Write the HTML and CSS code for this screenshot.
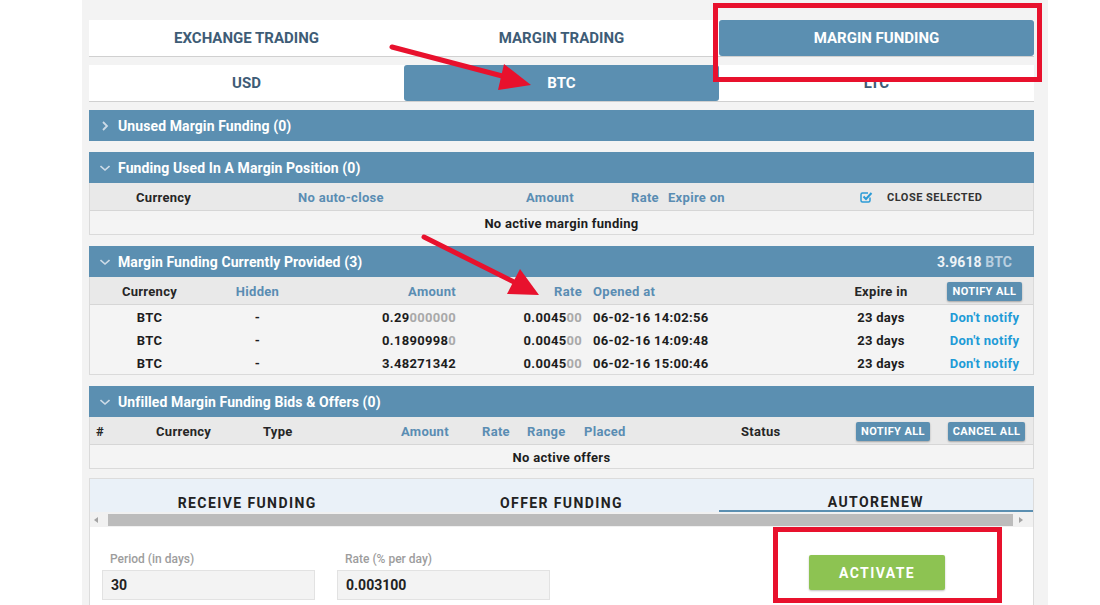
FILE: index.html
```html
<!DOCTYPE html>
<html>
<head>
<meta charset="utf-8">
<link rel="stylesheet" href="styles.css">
</head>
<body>
<div class="page">
  <div class="tabs main-tabs">
    <div class="tab">EXCHANGE TRADING</div>
    <div class="tab">MARGIN TRADING</div>
    <div class="tab active">MARGIN FUNDING</div>
  </div>
  <div class="tabs cur-tabs">
    <div class="tab">USD</div>
    <div class="tab active">BTC</div>
    <div class="tab">LTC</div>
  </div>

  <section class="panel first">
    <div class="panel-head">
      <svg class="chev" width="10" height="10" viewBox="0 0 10 10"><path d="M3 1l4 4-4 4" fill="none" stroke="#cddbe7" stroke-width="1.8"/></svg>
      <span>Unused Margin Funding (0)</span>
    </div>
  </section>

  <section class="panel">
    <div class="panel-head">
      <svg class="chev" width="10" height="10" viewBox="0 0 10 10"><path d="M0.5 3l4.5 4 4.5-4" fill="none" stroke="#cddbe7" stroke-width="1.6"/></svg>
      <span>Funding Used In A Margin Position (0)</span>
    </div>
    <div class="panel-body">
      <div class="row head g2">
        <div class="c pad46">Currency</div>
        <div class="c sort">No auto-close</div>
        <div class="c sort">Amount</div>
        <div class="c sort">Rate</div>
        <div class="c sort">Expire on</div>
        <div class="c closesel">
          <svg width="13" height="12" viewBox="0 0 13 12"><path d="M10 6.5V9.5a1.5 1.5 0 0 1-1.5 1.5h-6A1.5 1.5 0 0 1 1 9.5v-6A1.5 1.5 0 0 1 2.5 2h5.5" fill="none" stroke="#2b9bd6" stroke-width="1.5"/><path d="M3.5 5.5l2.5 2.5 5.5-6" fill="none" stroke="#2b9bd6" stroke-width="2"/></svg>
          <span>CLOSE SELECTED</span>
        </div>
      </div>
      <div class="row empty">No active margin funding</div>
    </div>
  </section>

  <section class="panel">
    <div class="panel-head">
      <svg class="chev" width="10" height="10" viewBox="0 0 10 10"><path d="M0.5 3l4.5 4 4.5-4" fill="none" stroke="#cddbe7" stroke-width="1.6"/></svg>
      <span>Margin Funding Currently Provided (3)</span>
      <span class="total">3.9618 <span class="cur">BTC</span></span>
    </div>
    <div class="panel-body">
      <div class="row head g3">
        <div class="c ctr">Currency</div>
        <div class="c ctr sort">Hidden</div>
        <div class="c rgt sort">Amount</div>
        <div class="c rgt sort">Rate</div>
        <div class="c pad11 sort">Opened at</div>
        <div class="c ctr">Expire in</div>
        <div class="c ctr"><span class="btn w75">NOTIFY ALL</span></div>
      </div>
      <div class="row data g3">
        <div class="c ctr">BTC</div>
        <div class="c ctr">-</div>
        <div class="c rgt">0.29<span class="dim">000000</span></div>
        <div class="c rgt">0.0045<span class="dim">00</span></div>
        <div class="c pad11">06-02-16 14:02:56</div>
        <div class="c ctr">23 days</div>
        <div class="c ctr link">Don't notify</div>
      </div>
      <div class="row data g3">
        <div class="c ctr">BTC</div>
        <div class="c ctr">-</div>
        <div class="c rgt">0.1890998<span class="dim">0</span></div>
        <div class="c rgt">0.0045<span class="dim">00</span></div>
        <div class="c pad11">06-02-16 14:09:48</div>
        <div class="c ctr">23 days</div>
        <div class="c ctr link">Don't notify</div>
      </div>
      <div class="row data g3">
        <div class="c ctr">BTC</div>
        <div class="c ctr">-</div>
        <div class="c rgt">3.48271342</div>
        <div class="c rgt">0.0045<span class="dim">00</span></div>
        <div class="c pad11">06-02-16 15:00:46</div>
        <div class="c ctr">23 days</div>
        <div class="c ctr link">Don't notify</div>
      </div>
    </div>
  </section>

  <section class="panel">
    <div class="panel-head">
      <svg class="chev" width="10" height="10" viewBox="0 0 10 10"><path d="M0.5 3l4.5 4 4.5-4" fill="none" stroke="#cddbe7" stroke-width="1.6"/></svg>
      <span>Unfilled Margin Funding Bids &amp; Offers (0)</span>
    </div>
    <div class="panel-body">
      <div class="row head g4">
        <div class="c pad7">#</div>
        <div class="c">Currency</div>
        <div class="c">Type</div>
        <div class="c sort">Amount</div>
        <div class="c sort">Rate</div>
        <div class="c sort">Range</div>
        <div class="c sort">Placed</div>
        <div class="c">Status</div>
        <div class="c"><span class="btn w74">NOTIFY ALL</span></div>
        <div class="c"><span class="btn w77">CANCEL ALL</span></div>
      </div>
      <div class="row empty">No active offers</div>
    </div>
  </section>

  <section class="form-panel">
    <div class="ftabs">
      <div class="ftab">RECEIVE FUNDING</div>
      <div class="ftab">OFFER FUNDING</div>
      <div class="ftab active">AUTORENEW</div>
    </div>
    <div class="scrollbar">
      <span class="sarrow left"></span>
      <div class="thumb"></div>
      <span class="sarrow right"></span>
    </div>
    <div class="form-body">
      <div class="field">
        <div class="label">Period (in days)</div>
        <div class="input">30</div>
      </div>
      <div class="field">
        <div class="label">Rate (% per day)</div>
        <div class="input">0.003100</div>
      </div>
      <div class="activate">ACTIVATE</div>
    </div>
  </section>
</div>

<svg class="annot" width="1100" height="605" viewBox="0 0 1100 605">
  <rect x="715.5" y="5.5" width="324" height="74" fill="none" stroke="#e8112d" stroke-width="5"/>
  <rect x="775.5" y="529.5" width="224" height="71" fill="none" stroke="#e8112d" stroke-width="5"/>
  <line x1="392" y1="47" x2="506" y2="77" stroke="#e8112d" stroke-width="5" stroke-linecap="round"/>
  <polygon points="531,85 504,64 498,90" fill="#e8112d"/>
  <line x1="424" y1="237" x2="516" y2="283" stroke="#e8112d" stroke-width="5" stroke-linecap="round"/>
  <polygon points="539,295 520,269 507,294" fill="#e8112d"/>
</svg>
</body>
</html>
```
FILE: styles.css
```css
* { box-sizing: border-box; }
html, body { margin: 0; padding: 0; }
body {
  background: #fff;
  font-family: Roboto, "Liberation Sans", Arial, sans-serif;
  width: 1100px;
  height: 605px;
  overflow: hidden;
  position: relative;
}
.page {
  margin-left: 82px;
  width: 966px;
  height: 605px;
  background: #f3f3f3;
  padding: 20px 14px 0 7px;
}

/* top tabs */
.tabs {
  display: grid;
  grid-template-columns: repeat(3, 1fr);
  background: #fff;
  border-bottom: 1px solid #d0d0d0;
  height: 37px;
}
.cur-tabs { margin-top: 8px; }
.tab {
  display: flex;
  align-items: center;
  justify-content: center;
  font-size: 15px;
  font-weight: 700;
  color: #3e5c76;
}
.tab.active {
  background: #5b8fb1;
  color: #fff;
  border-radius: 3px;
}

/* panels */
.panel { margin-top: 11px; }
.panel.first { margin-top: 8px; }
.panel-head {
  height: 31px;
  background: #5b8fb1;
  color: #fff;
  font-size: 14px;
  font-weight: 700;
  letter-spacing: 0.1px;
  display: flex;
  align-items: center;
  padding-left: 11px;
  padding-right: 22px;
}
.panel-head .chev { margin-right: 8px; }
.panel-head .total { margin-left: auto; color: #eef3f7; }
.panel-head .total .cur { color: #b9cfe0; }
.panel-body {
  border: 1px solid #dadada;
  border-top: none;
}
.row {
  display: grid;
  align-items: center;
  font-size: 13px;
  font-weight: 700;
  letter-spacing: 0.3px;
  color: #1d1d1d;
  padding-top: 1px;
}
.row.head {
  height: 28px;
  background: #e9e9e9;
  border-bottom: 1px solid #d6d6d6;
  color: #262626;
}
.row.data {
  height: 23px;
  background: #f4f4f4;
}
.row.empty {
  display: flex;
  align-items: center;
  justify-content: center;
  height: 23px;
  background: #f4f4f4;
}
.c { white-space: nowrap; }
.ctr { text-align: center; }
.rgt { text-align: right; }
.pad46 { padding-left: 46px; }
.pad11 { padding-left: 11px; }
.pad7 { padding-left: 6px; }
.sort { color: #5a8db3; }
.dim { color: #a9a9a9; }
.link { color: #1e9bd7; }

.g2 { grid-template-columns: 208px 228px 105px 37px 192px 1fr; }
.g3 { grid-template-columns: 119px 97px 150px 126px 244px 110px 1fr; }
.g4 { grid-template-columns: 66px 107px 138px 81px 45px 57px 157px 115px 92px 1fr; }

.closesel {
  display: flex;
  align-items: center;
  gap: 14px;
  font-size: 11px;
  letter-spacing: 0.5px;
  color: #333;
}

.btn {
  display: inline-flex;
  align-items: center;
  justify-content: center;
  height: 19px;
  background: #5b8fb1;
  color: #fff;
  font-size: 11px;
  font-weight: 700;
  letter-spacing: 0.4px;
  border-radius: 2px;
  box-shadow: 0 1px 2px rgba(0,0,0,0.3);
}
.w75 { width: 75px; }
.w74 { width: 74px; }
.w77 { width: 77px; }

/* bottom form */
.form-panel {
  margin-top: 9px;
  border: 1px solid #dcdcdc;
  background: #fff;
  height: 140px;
}
.ftabs {
  display: grid;
  grid-template-columns: repeat(3, 1fr);
  height: 33px;
  background: #eaf1f8;
}
.ftab {
  display: flex;
  align-items: flex-end;
  justify-content: center;
  font-size: 14px;
  font-weight: 700;
  letter-spacing: 1.4px;
  color: #222;
  padding-bottom: 1px;
  line-height: 16px;
}
.ftab.active { border-bottom: 2px solid #5b8fb1; padding-bottom: 0; }
.scrollbar {
  position: relative;
  height: 15px;
  background: #f1f1f1;
  display: flex;
  align-items: center;
  padding: 0 10px 0 4px;
}
.thumb {
  flex: 1;
  height: 12px;
  background: #bcbcbc;
  margin: 0 6px 0 10px;
}
.sarrow {
  width: 0;
  height: 0;
  border-top: 3px solid transparent;
  border-bottom: 3px solid transparent;
}
.sarrow.left { border-right: 4px solid #a3a3a3; }
.sarrow.right { border-left: 4px solid #a3a3a3; }

.form-body {
  display: flex;
  align-items: flex-start;
  padding: 25px 0 0 12px;
  gap: 22px;
}
.field { width: 213px; }
.label {
  font-size: 12px;
  font-weight: 500;
  line-height: 14px;
  color: #9d9d9d;
  padding-left: 8px;
  margin-bottom: 4px;
}
.input {
  height: 30px;
  background: #f3f3f3;
  border: 1px solid #e2e2e2;
  font-size: 14px;
  font-weight: 700;
  color: #222;
  display: flex;
  align-items: center;
  padding-left: 8px;
}
.activate {
  margin-left: 237px;
  margin-top: 3px;
  width: 136px;
  height: 35px;
  background: #8dc352;
  color: #fff;
  font-size: 14px;
  font-weight: 700;
  letter-spacing: 1.4px;
  display: flex;
  align-items: center;
  justify-content: center;
  border-radius: 2px;
  box-shadow: 0 1px 2px rgba(0,0,0,0.25);
}

.annot {
  position: absolute;
  top: 0;
  left: 0;
  pointer-events: none;
}
```
